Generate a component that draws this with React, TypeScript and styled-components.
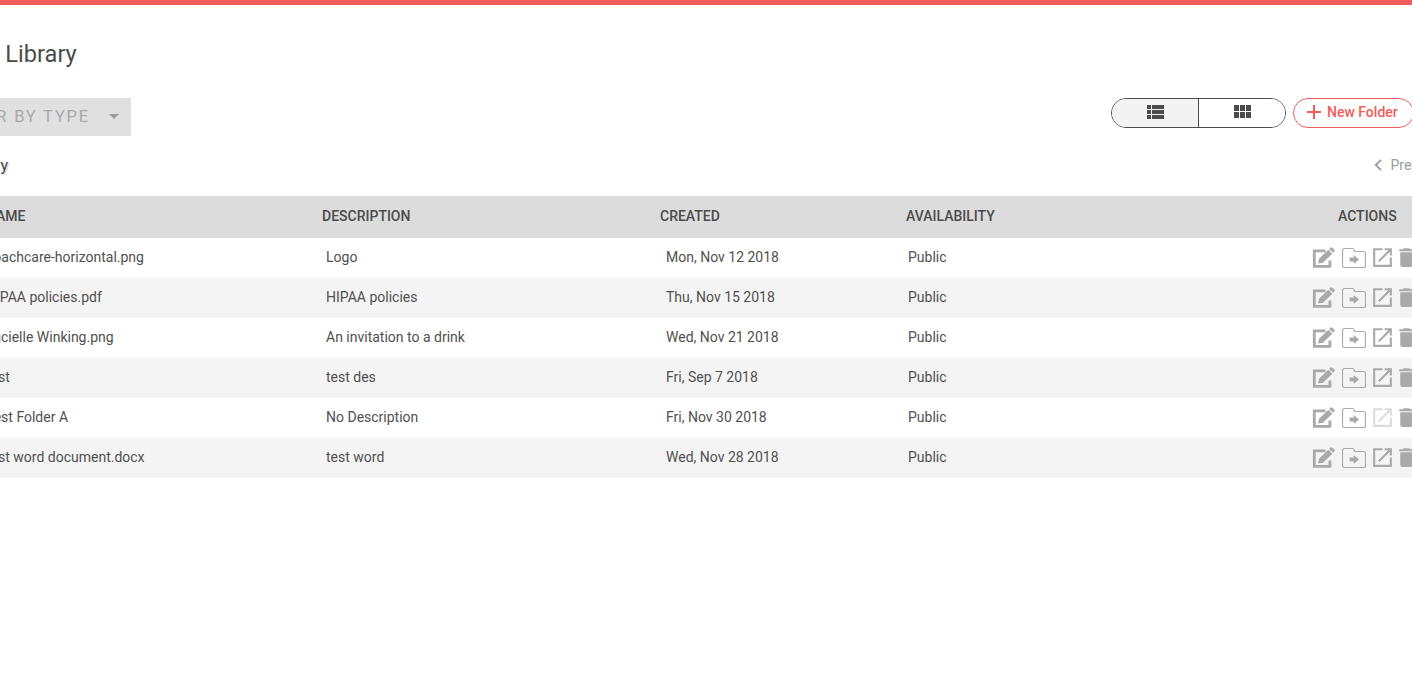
import styled, { createGlobalStyle } from 'styled-components';

type LibraryItem = {
  name: string;
  description: string;
  created: string;
  isFolder?: boolean;
};

const items: LibraryItem[] = [
  { name: 'coachcare-horizontal.png', description: 'Logo', created: 'Mon, Nov 12 2018' },
  { name: 'HIPAA policies.pdf', description: 'HIPAA policies', created: 'Thu, Nov 15 2018' },
  { name: 'Lucielle Winking.png', description: 'An invitation to a drink', created: 'Wed, Nov 21 2018' },
  { name: 'test', description: 'test des', created: 'Fri, Sep 7 2018' },
  { name: 'Test Folder A', description: 'No Description', created: 'Fri, Nov 30 2018', isFolder: true },
  { name: 'test word document.docx', description: 'test word', created: 'Wed, Nov 28 2018' },
];

const EditIcon = () => (
  <svg width="24" height="24" viewBox="0 0 24 24" fill="none">
    <path d="M13.5 4.8H2.3v15.6h15.6v-6" stroke="currentColor" strokeWidth="2.8" />
    <path d="M6 17.6l1-4.9 9.3-9 4 4-9.3 9z" fill="currentColor" />
    <path d="M17.1 2.9l1.2-1.2a1.5 1.5 0 0 1 2.1 0l1.8 1.8a1.5 1.5 0 0 1 0 2.1L21 6.8z" fill="currentColor" />
  </svg>
);

const MoveIcon = () => (
  <svg width="24" height="24" viewBox="0 0 24 24" fill="none">
    <path
      d="M2.5 2.5h7.8c1 0 1.6.4 1.8 1.3l.4 1.7h9a2 2 0 0 1 2 2v12a2 2 0 0 1-2 2h-19a2 2 0 0 1-2-2v-15a2 2 0 0 1 2-2z"
      stroke="currentColor"
      strokeWidth="1.2"
    />
    <path d="M7.6 11.4h4.2V8.9l5.2 4.6-5.2 4.6v-2.5H7.6z" fill="currentColor" />
  </svg>
);

const OpenIcon = () => (
  <svg width="25" height="25" viewBox="0 0 24 24" fill="currentColor">
    <path d="M19 19H5V5h7V3H3v18h18v-9h-2v7zM14 3v2h3.59l-9.83 9.83 1.41 1.41L19 6.41V10h2V3h-7z" />
  </svg>
);

const TrashIcon = () => (
  <svg width="25" height="25" viewBox="0 0 24 24" fill="currentColor">
    <path d="M6 19c0 1.1.9 2 2 2h8c1.1 0 2-.9 2-2V7H6v12zM19 4h-3.5l-1-1h-5l-1 1H5v2h14V4z" />
  </svg>
);

function App() {
  return (
    <>
      <GlobalStyle />
      <Page>
        <TopBar />
        <Content>
          <Title>Digital Library</Title>
          <Toolbar>
            <TypeFilter>
              <FilterLabel>FILTER BY TYPE</FilterLabel>
              <Caret />
            </TypeFilter>
            <Controls>
              <ViewToggle>
                <ViewButton $active>
                  <svg width="24" height="24" viewBox="0 0 24 24" fill="currentColor">
                    <path d="M4 14h4v-4H4v4zm0 5h4v-4H4v4zM4 9h4V5H4v4zm5 5h12v-4H9v4zm0 5h12v-4H9v4zM9 5v4h12V5H9z" />
                  </svg>
                </ViewButton>
                <ViewButton>
                  <svg width="24" height="24" viewBox="0 0 24 24" fill="currentColor">
                    <path d="M4 11h5V5H4v6zm0 7h5v-6H4v6zm6 0h5v-6h-5v6zm6 0h5v-6h-5v6zm-6-7h5V5h-5v6zm6-6v6h5V5h-5z" />
                  </svg>
                </ViewButton>
              </ViewToggle>
              <NewFolder>
                <svg width="14" height="14" viewBox="0 0 14 14" stroke="currentColor" strokeWidth="2">
                  <path d="M7 0v14M0 7h14" />
                </svg>
                New Folder
              </NewFolder>
            </Controls>
          </Toolbar>
          <SubBar>
            <Breadcrumb>Library</Breadcrumb>
            <Pager>
              <svg width="8" height="12" viewBox="0 0 8 12" fill="none" stroke="currentColor" strokeWidth="1.9">
                <path d="M7 .8L1.8 6 7 11.2" />
              </svg>
              Prev
            </Pager>
          </SubBar>
          <HeaderRow>
            <span>NAME</span>
            <span>DESCRIPTION</span>
            <span>CREATED</span>
            <span>AVAILABILITY</span>
            <span>ACTIONS</span>
          </HeaderRow>
          {items.map((item, index) => (
            <Row key={item.name} $striped={index % 2 === 1}>
              <span>{item.name}</span>
              <span>{item.description}</span>
              <span>{item.created}</span>
              <span>Public</span>
              <Actions>
                <Action><EditIcon /></Action>
                <Action><MoveIcon /></Action>
                <Action $disabled={item.isFolder}><OpenIcon /></Action>
                <Action><TrashIcon /></Action>
              </Actions>
            </Row>
          ))}
        </Content>
      </Page>
    </>
  );
}

export default App;

const GlobalStyle = createGlobalStyle`
  body {
    margin: 0;
    background-color: #fff;
    font-family: Roboto, sans-serif;
    color: #4b4b4b;
  }
`;

const Page = styled.div`
  width: 100%;
  height: 100vh;
  overflow: hidden;
`;

const TopBar = styled.div`
  height: 5px;
  background-color: #f35c5c;
`;

/* The content is wider than the viewport and runs off on both sides. */
const Content = styled.div`
  width: 1492px;
  margin-left: -70px;
`;

const Title = styled.h1`
  margin: 0;
  padding: 33px 0 0 3px;
  height: 60px;
  font-size: 23.6px;
  line-height: 32px;
  font-weight: 400;
`;

const Toolbar = styled.div`
  display: flex;
  justify-content: space-between;
  height: 38px;
`;

const TypeFilter = styled.div`
  display: flex;
  align-items: center;
  justify-content: flex-end;
  gap: 19px;
  width: 201px;
  padding-right: 12px;
  box-sizing: border-box;
  background-color: #e0e0e0;
`;

const FilterLabel = styled.span`
  padding-bottom: 2px;
  color: #a9a9a9;
  font-size: 16.5px;
  letter-spacing: 1.8px;
  white-space: nowrap;
`;

const Caret = styled.i`
  border: 5px solid transparent;
  border-top-color: #9c9c9c;
  border-bottom: 0;
  margin-bottom: 1px;
`;

const Controls = styled.div`
  display: flex;
  gap: 7px;
  padding-right: 8px;
`;

const ViewToggle = styled.div`
  display: flex;
  width: 175px;
  height: 30px;
  box-sizing: border-box;
  border: 1px solid #4b4b4b;
  border-radius: 15px;
  overflow: hidden;
`;

const ViewButton = styled.div<{ $active?: boolean }>`
  display: flex;
  flex: 1;
  align-items: center;
  justify-content: center;
  padding-bottom: 2px;
  background-color: ${({ $active }) => ($active ? '#f3f3f3' : '#fff')};

  & + & {
    border-left: 1px solid #4b4b4b;
  }
`;

const NewFolder = styled.div`
  display: flex;
  align-items: center;
  gap: 6px;
  width: 121px;
  height: 30px;
  padding: 0 0 2px 13px;
  box-sizing: border-box;
  border: 1px solid #f35c5c;
  border-radius: 15px;
  color: #f35c5c;
  font-size: 14px;
  font-weight: 500;
  white-space: nowrap;
`;

const SubBar = styled.div`
  display: flex;
  justify-content: space-between;
  align-items: center;
  height: 60px;
  padding-bottom: 2px;
  box-sizing: border-box;
`;

const Breadcrumb = styled.div`
  width: 78px;
  text-align: right;
  font-size: 16px;
  text-shadow: 1px 1px 2px rgba(0, 0, 0, 0.25);
`;

const Pager = styled.div`
  display: flex;
  align-items: center;
  gap: 8.5px;
  width: 48px;
  color: #9c9c9c;
  font-size: 14px;
`;

const Grid = styled.div`
  display: grid;
  align-items: center;
  padding: 0 0 2px 56px;
  box-sizing: border-box;
  font-size: 14px;
  white-space: nowrap;
`;

const HeaderRow = styled(Grid)`
  grid-template-columns: 336px 338px 246px 432px 1fr;
  height: 42px;
  background-color: #dcdcdc;
  font-weight: 500;
`;

const Row = styled(Grid)<{ $striped: boolean }>`
  grid-template-columns: 340px 340px 242px 404px 1fr;
  height: 40px;
  color: #505050;
  background-color: ${({ $striped }) => ($striped ? '#f4f4f4' : '#fff')};
`;

const Actions = styled.div`
  display: flex;
  align-items: center;
  padding-top: 1px;
`;

const Action = styled.div<{ $disabled?: boolean }>`
  display: flex;
  color: #a9a9a9;
  opacity: ${({ $disabled }) => ($disabled ? 0.4 : 1)};

  &:nth-child(1) {
    margin-right: 6px;
  }

  &:nth-child(2) {
    margin-right: 4px;
  }

  &:nth-child(3) {
    margin-right: -1px;
  }
`;
